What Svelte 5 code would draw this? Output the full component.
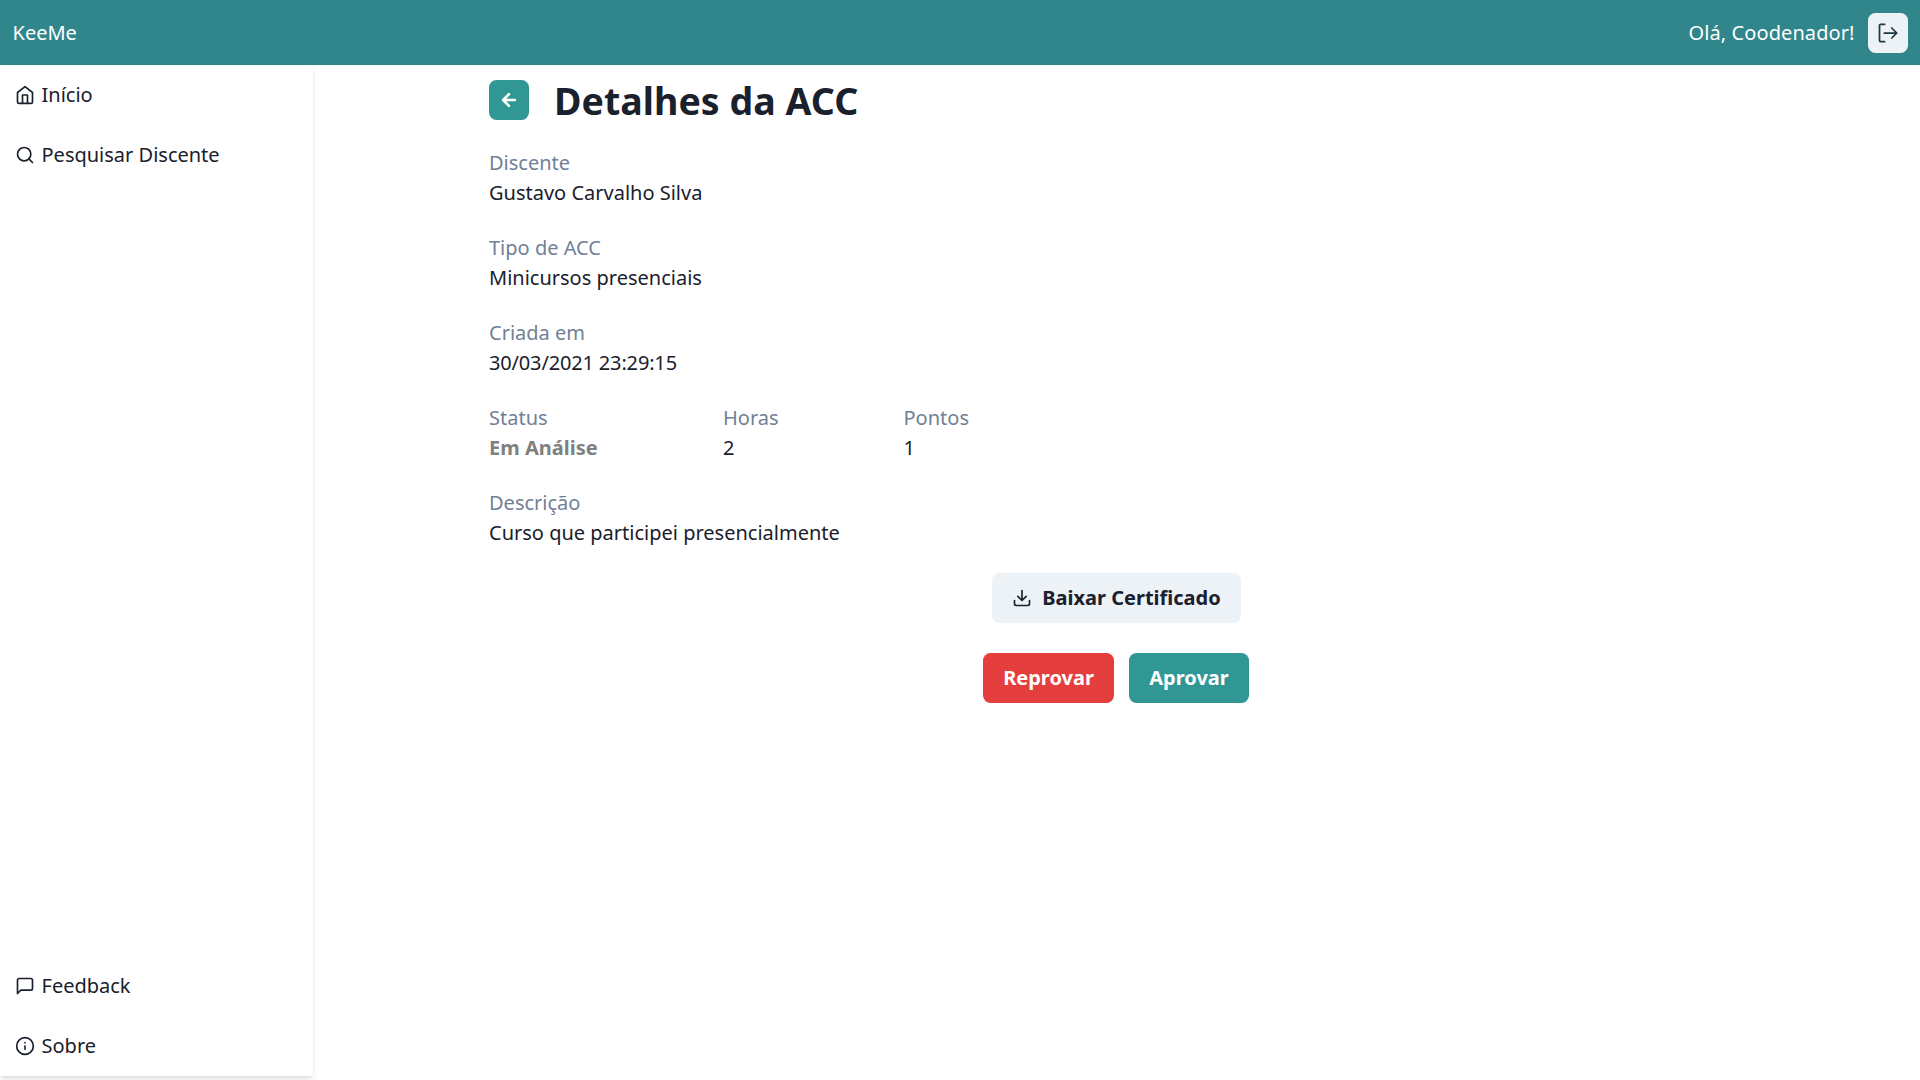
<script>
  const topLinks = [
    { icon: 'home', label: 'Início' },
    { icon: 'search', label: 'Pesquisar Discente' },
  ];
  const bottomLinks = [
    { icon: 'message', label: 'Feedback' },
    { icon: 'info', label: 'Sobre' },
  ];
</script>

{#snippet icon(name)}
  <svg class="icon" viewBox="0 0 24 24" fill="none" stroke="currentColor" stroke-width="2" stroke-linecap="round" stroke-linejoin="round" aria-hidden="true">
    {#if name === 'home'}
      <path d="M3 9l9-7 9 7v11a2 2 0 0 1-2 2H5a2 2 0 0 1-2-2z" />
      <path d="M9 22V12h6v10" />
    {:else if name === 'search'}
      <circle cx="11" cy="11" r="8" />
      <path d="M21 21l-4.35-4.35" />
    {:else if name === 'message'}
      <path d="M21 15a2 2 0 0 1-2 2H7l-4 4V5a2 2 0 0 1 2-2h14a2 2 0 0 1 2 2z" />
    {:else if name === 'info'}
      <circle cx="12" cy="12" r="10" />
      <path d="M12 16v-4M12 8h.01" />
    {:else if name === 'download'}
      <path d="M21 15v4a2 2 0 0 1-2 2H5a2 2 0 0 1-2-2v-4M7 10l5 5 5-5M12 15V3" />
    {/if}
  </svg>
{/snippet}

{#snippet field(label, value, kind = '')}
  <div class="field">
    <p class="label">{label}</p>
    <p class={kind}>{value}</p>
  </div>
{/snippet}

<div class="page">
  <header>
    <span>KeeMe</span>
    <div class="user">
      <span class="greeting">Olá, Coodenador!</span>
      <button class="square logout" aria-label="Sair">
        <svg class="icon" viewBox="0 0 24 24" fill="none" stroke="currentColor" stroke-width="2.1" stroke-linecap="round" stroke-linejoin="round">
          <path d="M8 1.6H3.2a1.4 1.4 0 0 0-1.4 1.4v18a1.4 1.4 0 0 0 1.4 1.4H8M7.5 12H22.5M16.5 6l6 6-6 6" />
        </svg>
      </button>
    </div>
  </header>

  <div class="body">
    <nav>
      <div>
        {#each topLinks as link}
          <a href="#top">{@render icon(link.icon)}{link.label}</a>
        {/each}
      </div>
      <div>
        {#each bottomLinks as link}
          <a href="#top">{@render icon(link.icon)}{link.label}</a>
        {/each}
      </div>
    </nav>

    <main>
      <div class="content">
        <div class="title">
          <button class="square back" aria-label="Voltar">
            <svg class="icon" viewBox="0 0 24 24" fill="none" stroke="currentColor" stroke-width="3.1" stroke-linecap="round" stroke-linejoin="round">
              <path d="M19 12H5.2M12 5l-7 7 7 7" />
            </svg>
          </button>
          <h1>Detalhes da ACC</h1>
        </div>

        {@render field('Discente', 'Gustavo Carvalho Silva')}
        {@render field('Tipo de ACC', 'Minicursos presenciais')}
        {@render field('Criada em', '30/03/2021 23:29:15', 'date')}
        <div class="stats">
          {@render field('Status', 'Em Análise', 'status')}
          {@render field('Horas', '2')}
          {@render field('Pontos', '1')}
        </div>
        {@render field('Descrição', 'Curso que participei presencialmente')}

        <div class="actions">
          <button class="btn download">{@render icon('download')}Baixar Certificado</button>
        </div>
        <div class="actions decision">
          <button class="btn reject">Reprovar</button>
          <button class="btn approve">Aprovar</button>
        </div>
      </div>
    </main>
  </div>
</div>

<style>
  :global(body) {
    margin: 0;
    background: #fff;
  }
  .page {
    height: 1080px;
    display: flex;
    flex-direction: column;
    overflow: hidden;
    color: #1a202c;
    font: 20px/30px 'Noto Sans', sans-serif;
  }
  p,
  h1 {
    margin: 0;
  }
  button {
    border: 0;
    padding: 0;
    font: inherit;
    color: inherit;
    border-radius: 7.5px;
    display: flex;
    align-items: center;
    justify-content: center;
  }
  svg {
    display: block;
    flex: none;
  }
  .icon {
    width: 20px;
    height: 20px;
  }
  header {
    height: 65px;
    flex: none;
    box-sizing: border-box;
    padding: 0 12.5px;
    display: flex;
    align-items: center;
    justify-content: space-between;
    background: #31868b;
    color: #fff;
  }
  .user {
    display: flex;
    align-items: center;
    gap: 13px;
  }
  .greeting {
    letter-spacing: 0.08px;
  }
  .square {
    width: 40px;
    height: 40px;
    flex: none;
  }
  .logout {
    background: #edf2f7;
    color: #1d3b45;
  }
  .body {
    flex: 1;
    min-height: 0;
    display: flex;
  }
  nav {
    width: 313px;
    height: 1011px;
    flex: none;
    display: flex;
    flex-direction: column;
    justify-content: space-between;
    box-shadow: 0 4px 6px -1px rgba(0, 0, 0, 0.1), 0 2px 4px -1px rgba(0, 0, 0, 0.06);
  }
  nav a {
    height: 60px;
    padding: 0 15px;
    display: flex;
    align-items: center;
    gap: 6.5px;
    color: inherit;
    text-decoration: none;
  }
  main {
    flex: 1;
    display: flex;
    justify-content: center;
  }
  .content {
    width: 1255px;
    padding-top: 15px;
    display: flex;
    flex-direction: column;
    gap: 25px;
  }
  .title {
    height: 43px;
    display: flex;
    align-items: flex-start;
    gap: 25px;
  }
  .back {
    background: #319795;
    color: #fff;
  }
  h1 {
    font-size: 37.5px;
    line-height: 41px;
    font-weight: 700;
    letter-spacing: 0.05px;
  }
  .label {
    color: #718096;
  }
  .stats {
    display: grid;
    grid-template-columns: 234px 180.5px auto;
  }
  .date {
    letter-spacing: -0.16px;
  }
  .status {
    color: #808080;
    font-weight: 700;
  }
  .actions {
    display: flex;
    justify-content: center;
    gap: 15px;
  }
  .decision {
    margin-top: 5px;
    padding-right: 1px;
  }
  .btn {
    height: 50px;
    padding: 0 20px;
    font-weight: 700;
  }
  .download {
    gap: 10px;
    background: #edf2f7;
  }
  .decision .btn {
    padding: 0;
  }
  .reject {
    width: 131px;
    background: #e53e3e;
    color: #fff;
  }
  .approve {
    width: 120px;
    background: #319795;
    color: #fff;
  }
</style>
